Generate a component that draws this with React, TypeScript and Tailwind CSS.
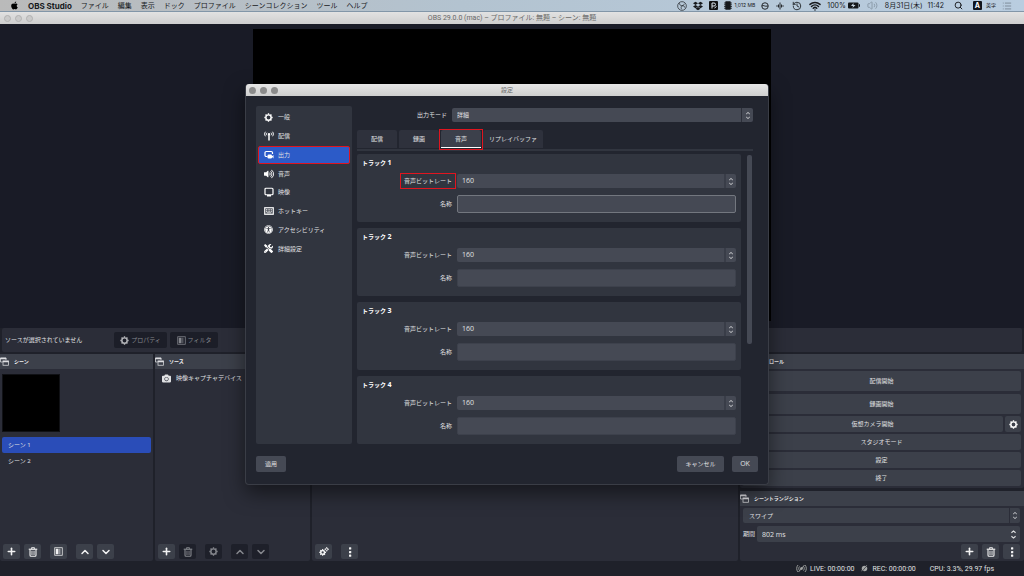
import React from "react";
import { ChevronDown, ChevronUp, History, List, Plus, Search, Volume2, Wifi } from "lucide-react";
import { FaApple, FaCamera, FaDropbox, FaTools, FaUniversalAccess, FaVolumeUp } from "react-icons/fa";

type Glyph = React.ReactNode;

const GearIcon = ({ className = "size-[9px]" }: { className?: string }) => (
  <svg viewBox="0 0 20 20" className={className} fill="none" stroke="currentColor" aria-hidden="true">
    <circle cx="10" cy="10" r="5.900" strokeWidth="3.200" />
    <path
      d="M10 0.800v3M10 16.200v3M0.800 10h3M16.200 10h3M3.500 3.500l2 2M14.500 14.500l2 2M3.500 16.500l2-2M14.500 5.500l2-2"
      strokeWidth="3"
    />
  </svg>
);

const GearsIcon = () => (
  <svg viewBox="0 0 22 20" className="h-[9px] w-[10px]" fill="none" stroke="currentColor" aria-hidden="true">
    <circle cx="8" cy="12" r="4.200" strokeWidth="3.400" />
    <path d="M8 4.500v3M8 16.500v3M0.500 12h3M12.500 12h3M2.800 6.800l2 2M11.200 15.200l2 2M2.800 17.200l2-2" strokeWidth="2.600" />
    <circle cx="17" cy="5" r="2.600" strokeWidth="2.200" />
    <path d="M17 0v2M17 8v2M12 5h2M20 5h2" strokeWidth="2" />
  </svg>
);

const TrashIcon = () => (
  <svg viewBox="0 0 20 20" className="size-[10px]" fill="none" stroke="currentColor" aria-hidden="true">
    <path d="M1.500 4.500h17" strokeWidth="2.400" />
    <path d="M7 3.500V1.500h6v2" strokeWidth="2" />
    <path d="M4 6v10.500a2 2 0 0 0 2 2h8a2 2 0 0 0 2-2V6" strokeWidth="2.200" />
    <path d="M7.500 7.500v8.500M10 7.500v8.500M12.500 7.500v8.500" strokeWidth="1.300" />
  </svg>
);

const DotsIcon = () => (
  <svg viewBox="0 0 20 20" className="size-[10px]" fill="currentColor" aria-hidden="true">
    <rect x="8" y="0.500" width="4.500" height="4.500" rx="1" />
    <rect x="8" y="7.800" width="4.500" height="4.500" rx="1" />
    <rect x="8" y="15" width="4.500" height="4.500" rx="1" />
  </svg>
);

const AntennaIcon = () => (
  <svg viewBox="0 0 20 20" className="size-[10px]" fill="none" stroke="currentColor" strokeWidth="2" aria-hidden="true">
    <path d="M3 1.500C0.800 4 0.800 8 3 10.500M6 3.500c-1.300 1.500-1.300 3.500 0 5M17 1.500c2.200 2.500 2.200 6.500 0 9M14 3.500c1.300 1.500 1.300 3.500 0 5" />
    <circle cx="10" cy="6.500" r="2.300" fill="currentColor" stroke="none" />
    <path d="M10 7v12" strokeWidth="3" />
  </svg>
);

const OutputIcon = () => (
  <svg viewBox="0 0 20 20" className="size-[10px]" aria-hidden="true">
    <path
      d="M7 13H4.500a2.500 2.500 0 0 1-2.500-2.500v-5A2.500 2.500 0 0 1 4.500 3h10A2.500 2.500 0 0 1 17 5.500V8"
      fill="none"
      stroke="currentColor"
      strokeWidth="2.400"
    />
    <rect x="7" y="9" width="9" height="8" rx="2.500" fill="currentColor" />
    <path d="M15 13l4-3v7z" fill="currentColor" />
  </svg>
);

const ScreenIcon = () => (
  <svg viewBox="0 0 20 20" className="size-[10px]" aria-hidden="true">
    <rect x="2" y="2.500" width="16" height="13" rx="2" fill="none" stroke="currentColor" strokeWidth="2.400" />
    <path d="M6 16h8v3H6z" fill="currentColor" />
  </svg>
);

const KeyboardIcon = () => (
  <svg viewBox="0 0 20 20" className="size-[10px]" fill="none" stroke="currentColor" aria-hidden="true">
    <rect x="1.500" y="3.500" width="17" height="13" strokeWidth="2.400" />
    <path d="M4 7.500h12M4 10.500h12" strokeWidth="2" strokeDasharray="2.200 1" />
    <path d="M5 13.700h10" strokeWidth="1.800" />
  </svg>
);

const ChipIcon = () => (
  <svg viewBox="0 0 16 18" className="h-[9px] w-2" stroke="currentColor" aria-hidden="true">
    <rect x="3" y="1" width="10" height="16" rx="1" fill="currentColor" />
    <path d="M0 4h16M0 7.500h16M0 11h16M0 14.500h16" strokeWidth="1.500" />
  </svg>
);

const DockIcon = () => (
  <svg viewBox="0 0 18 18" className="size-[9px] text-[#dcdde0]" fill="none" stroke="currentColor" aria-hidden="true">
    <path d="M5 10H1V2h11v4" strokeWidth="1.500" />
    <path d="M0.500 3h12" strokeWidth="3" />
    <rect x="6" y="8" width="11" height="8.500" strokeWidth="1.500" fill="#3c404a" />
    <path d="M5.500 9h12" strokeWidth="3" />
  </svg>
);

const FilterIcon = () => (
  <svg viewBox="0 0 18 18" className="size-[9px]" aria-hidden="true">
    <rect x="1.500" y="1.500" width="15" height="15" fill="none" stroke="currentColor" strokeWidth="1.500" />
    <path d="M3.500 3.500h5.500v11H3.500z" fill="currentColor" />
    <path d="M10 3.500h3v11h-3z" fill="currentColor" opacity="0.5" />
  </svg>
);

const ObsIcon = () => (
  <svg viewBox="0 0 20 20" className="size-[10px]" fill="none" stroke="currentColor" strokeWidth="1.300" aria-hidden="true">
    <circle cx="10" cy="10" r="8.700" />
    <path d="M5 4.500c0 3 2 5 5 5 2.500 0 4-1.500 4.500-4M10 9.500c-2 1.500-2.500 4.500-.5 7M10 9.500c3-.5 5.500 1 6 4" />
  </svg>
);

const StackedChevrons = ({ wide = false }: { wide?: boolean }) => (
  <svg
    viewBox="0 0 10 14"
    className={wide ? "h-[13px] w-[7px]" : "h-[9px] w-[6px]"}
    fill="none"
    stroke="currentColor"
    strokeWidth="1.500"
    aria-hidden="true"
  >
    <path d="M2 4.500L5 2l3 2.500M2 9.500L5 12l3-2.500" />
  </svg>
);

const menus = ["ファイル", "編集", "表示", "ドック", "プロファイル", "シーンコレクション", "ツール", "ヘルプ"];

function MenuBar() {
  return (
    <header className="flex h-3 items-center justify-between border-b border-[#8296a8] bg-linear-to-r from-[#bababa] via-[#b3c3d0] via-45% to-[#b9cde0] pr-3 pl-[10px] font-[Inter,'Noto_Sans_CJK_JP',sans-serif] text-[7px] leading-none text-[#17191c]">
      <nav className="flex items-center gap-[9px] whitespace-nowrap">
        <FaApple className="size-[9px] text-black" />
        <strong className="text-[8px]">OBS Studio</strong>
        {menus.map((m) => (
          <a key={m} href="#menu">
            {m}
          </a>
        ))}
      </nav>
      <div className="flex items-center gap-[6px] whitespace-nowrap">
        <ObsIcon />
        <FaDropbox className="size-[10px]" />
        <svg viewBox="0 0 18 18" className="size-[9px]" aria-hidden="true">
          <rect width="18" height="18" rx="2" fill="#111" />
          <path d="M6 15V4h4a3 3 0 0 1 0 6H6M11 14l4-3" fill="none" stroke="#dbe4ec" strokeWidth="2" />
        </svg>
        <span className="flex items-center gap-[3px] text-[5px]">
          <ChipIcon />
          1,012 MB
        </span>
        <svg viewBox="0 0 16 16" className="size-2" fill="none" stroke="currentColor" strokeWidth="1.800" aria-hidden="true">
          <circle cx="8" cy="8" r="6.500" />
          <path d="M2 8c3-3 5 2 12 0" />
        </svg>
        <svg viewBox="0 0 16 16" className="mx-px size-2" stroke="currentColor" strokeWidth="1.800" aria-hidden="true">
          <path d="M2 6.500v3M5 5v6M8 1v14M11 5v6M14 6.500v3" />
        </svg>
        <History className="mx-px size-[10px]" strokeWidth={2} />
        <Wifi className="size-3" strokeWidth={3} />
        <span className="flex items-center gap-[2px]">
          100%
          <svg viewBox="0 0 24 14" className="h-[7px] w-3" aria-hidden="true">
            <rect y="1" width="21" height="12" rx="2" fill="#15181b" />
            <rect x="22" y="4.500" width="2" height="5" fill="#15181b" />
            <path d="M11 2L6 8h4l-1 4 6-6h-4z" fill="#c5d3df" />
          </svg>
        </span>
        <Volume2 className="mx-px size-[11px] text-[#8797a5]" strokeWidth={2} />
        <span className="flex gap-[5px]">
          <span>8月31日(木)</span>
          <span>11:42</span>
        </span>
        <Search className="mx-1 size-[9px]" strokeWidth={2.5} />
        <span className="flex items-center gap-1 text-[5px]">
          <span className="flex size-[9px] items-center justify-center rounded-[1px] bg-[#10141c] text-[7px] font-bold text-white">
            A
          </span>
          英字
        </span>
        <List className="size-[10px] text-[#73818e]" />
      </div>
    </header>
  );
}

function ToolButton({ label, dim = false, children }: { label: string; dim?: boolean; children: Glyph }) {
  return (
    <button
      aria-label={label}
      className={`flex h-[15px] w-[17px] items-center justify-center rounded-[2px] ${
        dim ? "bg-[#1e202a] text-[#85878d]" : "bg-[#3c404a] text-[#f2f2f3]"
      }`}
    >
      {children}
    </button>
  );
}

function DockTitle({ children }: { children?: Glyph }) {
  return (
    <h2 className="flex h-[15px] shrink-0 items-center gap-[5px] bg-[#3c404a] pb-px text-[5px] font-bold text-[#f0f0f1]">
      <DockIcon />
      {children}
    </h2>
  );
}

function ScenesDock() {
  return (
    <section className="flex w-[153px] shrink-0 flex-col rounded-[2px] bg-[#2b2d38]">
      <DockTitle>シーン</DockTitle>
      <div className="flex-1 px-[2px] pt-[5px]">
        <div className="size-[58px] border border-[#101115] bg-black" />
        <ul className="pt-[5px]">
          <li className="flex h-4 items-center rounded-[2px] bg-[#2a4db8] px-[6px]">シーン 1</li>
          <li className="flex h-4 items-center px-[6px]">シーン 2</li>
        </ul>
      </div>
      <div className="flex gap-1 px-[3px] pb-[2px]">
        <ToolButton label="シーンを追加">
          <Plus className="size-[11px]" strokeWidth={3.5} />
        </ToolButton>
        <ToolButton label="シーンを削除">
          <TrashIcon />
        </ToolButton>
        <span className="w-px" />
        <ToolButton label="シーンフィルタ">
          <FilterIcon />
        </ToolButton>
        <span className="w-px" />
        <ToolButton label="上へ">
          <ChevronUp className="size-3" strokeWidth={3} />
        </ToolButton>
        <ToolButton label="下へ">
          <ChevronDown className="size-3" strokeWidth={3} />
        </ToolButton>
      </div>
    </section>
  );
}

function SourcesDock() {
  return (
    <section className="flex w-[155px] shrink-0 flex-col rounded-[2px] bg-[#2b2d38]">
      <DockTitle>ソース</DockTitle>
      <ul className="flex-1 px-[7px] pt-px">
        <li className="flex h-4 items-center gap-[5px] whitespace-nowrap">
          <FaCamera className="size-[9px]" />
          映像キャプチャデバイス
        </li>
      </ul>
      <div className="flex gap-1 px-[3px] pb-[2px]">
        <ToolButton label="ソースを追加">
          <Plus className="size-[11px]" strokeWidth={3.5} />
        </ToolButton>
        <ToolButton label="ソースを削除" dim>
          <TrashIcon />
        </ToolButton>
        <span className="w-px" />
        <ToolButton label="ソースのプロパティ" dim>
          <GearIcon />
        </ToolButton>
        <span className="w-px" />
        <ToolButton label="上へ" dim>
          <ChevronUp className="size-3" strokeWidth={3} />
        </ToolButton>
        <ToolButton label="下へ" dim>
          <ChevronDown className="size-3" strokeWidth={3} />
        </ToolButton>
      </div>
    </section>
  );
}

function MixerDock() {
  return (
    <section className="flex min-w-0 flex-1 flex-col rounded-[2px] bg-[#2b2d38]">
      <DockTitle />
      <div className="flex-1" />
      <div className="flex gap-[9px] px-[3px] pb-[2px]">
        <ToolButton label="オーディオの詳細プロパティ">
          <GearsIcon />
        </ToolButton>
        <ToolButton label="メニュー">
          <DotsIcon />
        </ToolButton>
      </div>
    </section>
  );
}

function WideButton({ tall = false, children }: { tall?: boolean; children: Glyph }) {
  return (
    <button className={`flex-1 rounded-[2px] bg-[#3c404a] text-center ${tall ? "h-5" : "h-4"}`}>{children}</button>
  );
}

function RightDocks() {
  return (
    <div className="flex w-[284px] shrink-0 flex-col gap-[3px]">
      <section className="flex flex-col rounded-[2px] bg-[#2b2d38]">
        <DockTitle>コントロール</DockTitle>
        <div className="flex flex-col gap-[2px] p-[2px] pr-[3px]">
          <div className="flex pb-px">
            <WideButton tall>配信開始</WideButton>
          </div>
          <div className="flex">
            <WideButton tall>録画開始</WideButton>
          </div>
          <div className="flex gap-[2px]">
            <WideButton>仮想カメラ開始</WideButton>
            <button
              aria-label="仮想カメラの設定"
              className="flex h-4 w-4 items-center justify-center rounded-[2px] bg-[#3c404a] text-white"
            >
              <GearIcon />
            </button>
          </div>
          <div className="flex">
            <WideButton>スタジオモード</WideButton>
          </div>
          <div className="flex">
            <WideButton>設定</WideButton>
          </div>
          <div className="flex">
            <WideButton>終了</WideButton>
          </div>
        </div>
      </section>
      <section className="flex flex-1 flex-col rounded-[2px] bg-[#2b2d38]">
        <DockTitle>シーントランジション</DockTitle>
        <div className="flex flex-1 flex-col gap-[3px] pt-[2px] pr-1 pl-[3px]">
          <div className="relative flex">
            <select
              aria-label="シーントランジション"
              className="h-[15px] flex-1 appearance-none rounded-[2px] bg-[#3c404a] px-[6px]"
            >
              <option>スワイプ</option>
            </select>
            <span className="pointer-events-none absolute inset-y-0 right-0 flex w-[11px] items-center justify-center border-l border-[#2b2d38]">
              <StackedChevrons />
            </span>
          </div>
          <div className="flex items-center gap-[2px]">
            <label htmlFor="duration">期間</label>
            <div className="relative flex flex-1">
              <input
                id="duration"
                defaultValue="802 ms"
                className="h-4 w-full rounded-[2px] bg-[#3c404a] px-[5px] text-[7px]"
              />
              <span className="pointer-events-none absolute inset-y-0 right-[3px] flex items-center">
                <StackedChevrons wide />
              </span>
            </div>
          </div>
        </div>
        <div className="flex justify-end gap-1 pr-1 pb-[2px]">
          <ToolButton label="トランジションを追加">
            <Plus className="size-[11px]" strokeWidth={3.5} />
          </ToolButton>
          <ToolButton label="トランジションを削除">
            <TrashIcon />
          </ToolButton>
          <ToolButton label="トランジションのメニュー">
            <DotsIcon />
          </ToolButton>
        </div>
      </section>
    </div>
  );
}

function StatusBar() {
  return (
    <footer className="flex h-[15px] shrink-0 items-center justify-end pr-[30px] font-[Roboto,sans-serif] text-[7px]">
      <span className="flex items-center gap-[3px]">
        <svg
          viewBox="0 0 22 18"
          className="h-[9px] w-[11px] text-[#a5a7a6]"
          fill="none"
          stroke="currentColor"
          strokeWidth="1.800"
          aria-hidden="true"
        >
          <path d="M4 2C0.500 6 0.500 12 4 16M7 5c-2 2.500-2 5.500 0 8M18 2c3.500 4 3.500 10 0 14M15 5c2 2.500 2 5.500 0 8M5 16L17 2" />
          <circle cx="11" cy="9" r="2" fill="currentColor" />
        </svg>
        LIVE: 00:00:00
      </span>
      <span className="ml-[6px] flex items-center gap-[5px]">
        <svg viewBox="0 0 14 14" className="size-[7px] text-[#a5a7a6]" aria-hidden="true">
          <circle cx="7" cy="7" r="5.500" fill="currentColor" />
          <path d="M1 14L13 0" stroke="#1f212a" strokeWidth="1.500" />
          <path d="M0 13L12 0" stroke="currentColor" strokeWidth="1.200" />
        </svg>
        REC: 00:00:00
      </span>
      <span className="ml-[14px]">CPU: 3.3%, 29.97 fps</span>
    </footer>
  );
}

const categories: { name: string; icon: Glyph }[] = [
  { name: "一般", icon: <GearIcon /> },
  { name: "配信", icon: <AntennaIcon /> },
  { name: "出力", icon: <OutputIcon /> },
  { name: "音声", icon: <FaVolumeUp className="size-[10px]" /> },
  { name: "映像", icon: <ScreenIcon /> },
  { name: "ホットキー", icon: <KeyboardIcon /> },
  { name: "アクセシビリティ", icon: <FaUniversalAccess className="size-[9px]" /> },
  { name: "詳細設定", icon: <FaTools className="size-[9px]" /> },
];

function TrackGroup({ n }: { n: number }) {
  const first = n === 1;
  return (
    <fieldset className="h-[68px] rounded-[2px] bg-[#31353f] px-[5px]">
      <h3 className="h-5 pt-[3px] leading-[12px] font-bold text-white">
        トラック <span className="text-[7px]">{n}</span>
      </h3>
      <div className="flex items-center gap-[5px]">
        <div className="flex w-[90px] justify-end">
          <label htmlFor={`rate-${n}`} className="relative -mr-1 px-1 py-[3px] leading-[8px]">
            音声ビットレート
            {first && <span className="pointer-events-none absolute -inset-y-px inset-x-0 border border-[#e0151f]" />}
          </label>
        </div>
        <div className="relative flex flex-1">
          <select
            id={`rate-${n}`}
            className="h-[14px] w-full appearance-none rounded-[2px] bg-[#454954] px-[5px] text-[7px]"
          >
            <option>160</option>
          </select>
          <span className="pointer-events-none absolute inset-y-0 right-0 flex w-3 items-center justify-center border-l-2 border-[#393d48]">
            <StackedChevrons />
          </span>
        </div>
      </div>
      <div className="mt-[7px] flex items-center gap-[5px]">
        <label htmlFor={`name-${n}`} className="w-[90px] text-right">
          名称
        </label>
        <input
          id={`name-${n}`}
          className={`h-[18px] min-w-0 flex-1 rounded-[2px] border bg-[#454954] px-1 ${
            first ? "border-[#73777f]" : "border-[#3d414c]"
          }`}
        />
      </div>
    </fieldset>
  );
}

const tabs = [
  { name: "配信", width: "w-10" },
  { name: "録画", width: "w-10" },
  { name: "音声", width: "w-10" },
  { name: "リプレイバッファ", width: "w-15" },
];

function SettingsDialog() {
  return (
    <div
      role="dialog"
      aria-labelledby="dialog-title"
      className="absolute top-[84px] left-[245px] w-[524px] rounded-[4px] border border-t-0 border-[#3a3d46] bg-[#22252f] shadow-[0_8px_20px_rgba(0,0,0,0.5)]"
    >
      <div className="relative flex h-3 items-center justify-center rounded-t-[3px] bg-linear-to-b from-[#e6e6e6] to-[#cfcfcf] text-[#6b6b6b]">
        <div className="absolute left-[3px] flex gap-1">
          <span className="size-[7px] rounded-full bg-[#8b8b8b]" />
          <span className="size-[7px] rounded-full bg-[#8b8b8b]" />
          <span className="size-[7px] rounded-full bg-[#8b8b8b]" />
        </div>
        <h1 id="dialog-title">設定</h1>
      </div>
      <div className="flex gap-[5px] px-[10px] pt-[10px]">
        <nav className="w-24 shrink-0 rounded-[2px] bg-[#31353f] px-[2px] pt-[2px]">
          <ul className="grid h-[150px] grid-rows-8">
            {categories.map((c, i) => (
              <li key={c.name} className="flex">
                <a
                  href="#category"
                  className={`flex flex-1 items-center gap-[4px] rounded-[2px] border ${
                    i === 2 ? "border-[#e0151f] bg-[#2c5bc8]" : "border-transparent"
                  } pl-1`}
                >
                  <span className="flex w-[11px] justify-center text-white">{c.icon}</span>
                  {c.name}
                </a>
              </li>
            ))}
          </ul>
        </nav>
        <div className="min-w-0 flex-1 pt-[2px] pr-[5px]">
          <div className="flex items-center gap-[5px]">
            <label htmlFor="mode" className="w-[90px] text-right">
              出力モード
            </label>
            <div className="relative flex flex-1">
              <select id="mode" className="h-[14px] w-full appearance-none rounded-[2px] bg-[#454954] px-[5px]">
                <option>詳細</option>
              </select>
              <span className="pointer-events-none absolute inset-y-0 right-0 flex w-3 items-center justify-center border-l border-[#2c2f39]">
                <StackedChevrons />
              </span>
            </div>
          </div>
          <div role="tablist" className="mt-2 flex gap-[2px] border-b-2 border-[#31353f] pb-px">
            {tabs.map((t, i) => (
              <button
                key={t.name}
                role="tab"
                aria-selected={i === 2}
                className={`relative h-[18px] rounded-t-[2px] whitespace-nowrap ${t.width} ${
                  i === 2 ? "border-b border-white bg-[#3c404b]" : "bg-[#2e313c]"
                }`}
              >
                {t.name}
                {i === 2 && (
                  <span className="pointer-events-none absolute -inset-x-[2px] -top-px -bottom-[3px] border border-[#e0151f]" />
                )}
              </button>
            ))}
          </div>
          <div className="mt-[3px] flex gap-[6px] pr-px">
            <div className="flex min-w-0 flex-1 flex-col gap-[6px]">
              {[1, 2, 3, 4].map((n) => (
                <TrackGroup key={n} n={n} />
              ))}
            </div>
            <div className="w-[5px] pt-px">
              <div className="h-[189px] rounded-[2px] bg-[#454954]" />
            </div>
          </div>
        </div>
      </div>
      <div className="flex gap-2 px-[10px] py-3">
        <button className="mr-auto h-4 rounded-[2px] bg-[#454954] px-[9px]">適用</button>
        <button className="h-4 w-[47px] rounded-[2px] bg-[#454954]">キャンセル</button>
        <button className="h-4 w-[26px] rounded-[2px] bg-[#454954] text-[7px]">OK</button>
      </div>
    </div>
  );
}

export default function App() {
  return (
    <div
      lang="ja"
      className="relative flex min-h-screen flex-col overflow-hidden bg-[#1f212a] font-['Open_Sans','Noto_Sans_CJK_JP',sans-serif] text-[6px] leading-[8px] text-[#e0e1e3]"
    >
      <MenuBar />
      <div className="relative flex h-3 items-center justify-center bg-linear-to-b from-[#e2e2e2] to-[#cecece] font-[Roboto,'Noto_Sans_CJK_JP',sans-serif] text-[7px] text-[#686868]">
        <div className="absolute left-1 flex gap-1">
          <span className="size-[7px] rounded-full border border-[#b2b2b2] bg-[#cacaca]" />
          <span className="size-[7px] rounded-full border border-[#b2b2b2] bg-[#cacaca]" />
          <span className="size-[7px] rounded-full border border-[#b2b2b2] bg-[#cacaca]" />
        </div>
        OBS 29.0.0 (mac) – プロファイル: 無題 – シーン: 無題
      </div>
      <main className="flex flex-1 justify-center bg-[#191b26] pt-[5px] pb-[7px]">
        <div className="w-[518px] bg-black" />
      </main>
      <div className="mx-[2px] flex h-6 items-center rounded-[2px] bg-[#2b2d38] px-[3px]">
        <span className="w-[109px]">ソースが選択されていません</span>
        <button className="flex h-4 w-[53px] items-center justify-center gap-[2px] rounded-[2px] bg-[#1c1e28] text-[#85878d]">
          <span className="text-[#b4b5b9]">
            <GearIcon />
          </span>
          プロパティ
        </button>
        <button className="ml-[3px] flex h-4 w-[48px] items-center justify-center gap-[2px] rounded-[2px] bg-[#1c1e28] text-[#85878d]">
          <FilterIcon />
          フィルタ
        </button>
      </div>
      <div className="mt-[2px] flex h-[207px] gap-[2px]">
        <ScenesDock />
        <SourcesDock />
        <MixerDock />
        <RightDocks />
      </div>
      <StatusBar />
      <SettingsDialog />
    </div>
  );
}
